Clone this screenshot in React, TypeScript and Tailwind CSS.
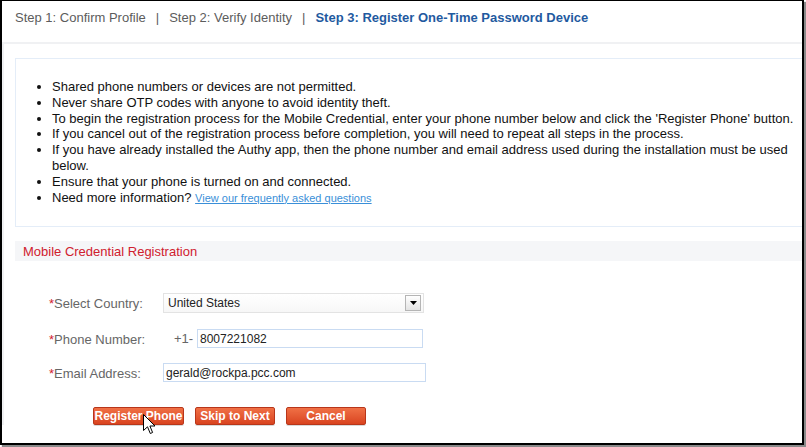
const bullets = [
  "Shared phone numbers or devices are not permitted.",
  "Never share OTP codes with anyone to avoid identity theft.",
  "To begin the registration process for the Mobile Credential, enter your phone number below and click the 'Register Phone' button.",
  "If you cancel out of the registration process before completion, you will need to repeat all steps in the process.",
  "If you have already installed the Authy app, then the phone number and email address used during the installation must be used below.",
  "Ensure that your phone is turned on and connected.",
];

function Label({ children }: { children: string }) {
  return (
    <span className="text-[13px] text-[#666]">
      <span className="text-[#d0202e]">*</span>
      {children}
    </span>
  );
}

function OrangeButton({ children, width }: { children: string; width: string }) {
  return (
    <button
      className={`${width} h-[18px] rounded-[2px] border border-[#b8361a] bg-gradient-to-b from-[#f07045] to-[#d9431f] text-[12px] font-bold leading-none text-white shadow-[0_1px_0_rgba(0,0,0,0.15)]`}
    >
      {children}
    </button>
  );
}

function Cursor() {
  return (
    <svg className="absolute left-[143px] top-[414px]" width="13" height="21" viewBox="0 0 13 21">
      <path
        d="M0.5 0.5 L0.5 16.5 L4.5 12.8 L7.3 19.5 L9.6 18.5 L6.9 12 L12 12 Z"
        fill="#fff"
        stroke="#000"
        strokeWidth="1"
        strokeLinejoin="round"
      />
    </svg>
  );
}

export default function App() {
  return (
    <div className="relative h-[447px] w-[806px] bg-white font-['Liberation_Sans',Arial,sans-serif]">
      <div className="h-[445px] w-[804px] border-2 border-t border-black bg-white shadow-[2px_2px_1px_#8a8a8a]">
        <div className="flex h-[41px] items-start pl-[13px] pt-[9px] text-[13px] leading-[16px] text-[#5c5c5c]">
          <span>Step 1: Confirm Profile</span>
          <span className="px-[10px]">|</span>
          <span>Step 2: Verify Identity</span>
          <span className="px-[10px]">|</span>
          <span className="font-bold text-[#1f5aa0]">Step 3: Register One-Time Password Device</span>
        </div>

        <div className="border-l-2 border-t-2 border-[#f0f1f3] pl-[11px] pt-[14px]">
          <div className="border border-r-0 border-[#e4edf8] pb-[20px] pl-[36px] pr-[6px] pt-[20px]">
            <ul className="list-disc text-[13px] leading-[15.8px] text-[#111]">
              {bullets.map((b) => (
                <li key={b}>{b}</li>
              ))}
              <li>
                Need more information?{" "}
                <a className="text-[11px] text-[#3a8fd8] underline">View our frequently asked questions</a>
              </li>
            </ul>
          </div>

          <div className="mt-[14px] flex h-[20px] items-center bg-[#f5f6f8] pl-[8px] text-[13px] text-[#d0202e]">
            Mobile Credential Registration
          </div>

          <div className="ml-[34px] mt-[32px] flex flex-col">
            <div className="flex h-[20px] items-center">
              <div className="w-[114px]">
                <Label>Select Country:</Label>
              </div>
              <div className="flex h-[20px] w-[261px] items-center justify-between border border-[#e3e3e3] bg-gradient-to-b from-white to-[#f7f7f7] pl-[4px] pr-[2px] text-[12px] text-[#222]">
                <span>United States</span>
                <span className="flex h-[16px] w-[16px] items-center justify-center border border-[#b5b5b5] bg-gradient-to-b from-white to-[#e4e4e4]">
                  <svg width="7" height="4" viewBox="0 0 7 4">
                    <path d="M0 0 L7 0 L3.5 4 Z" fill="#000" />
                  </svg>
                </span>
              </div>
            </div>

            <div className="mt-[16px] flex h-[19px] items-center">
              <div className="w-[114px]">
                <Label>Phone Number:</Label>
              </div>
              <span className="w-[34px] pl-[11px] text-[13px] text-[#666]">+1-</span>
              <div className="flex h-[19px] w-[226px] items-center border border-[#c9dbf2] pl-[2px] text-[12px] text-[#222]">
                8007221082
              </div>
            </div>

            <div className="mt-[15px] flex h-[19px] items-center">
              <div className="w-[114px]">
                <Label>Email Address:</Label>
              </div>
              <div className="flex h-[19px] w-[263px] items-center border border-[#c9dbf2] pl-[2px] text-[12px] text-[#222]">
                gerald@rockpa.pcc.com
              </div>
            </div>
          </div>

          <div className="ml-[78px] mt-[25px] flex gap-[11px]">
            <OrangeButton width="w-[91px]">Register Phone</OrangeButton>
            <OrangeButton width="w-[80px]">Skip to Next</OrangeButton>
            <OrangeButton width="w-[80px]">Cancel</OrangeButton>
          </div>
        </div>
      </div>
      <Cursor />
    </div>
  );
}
